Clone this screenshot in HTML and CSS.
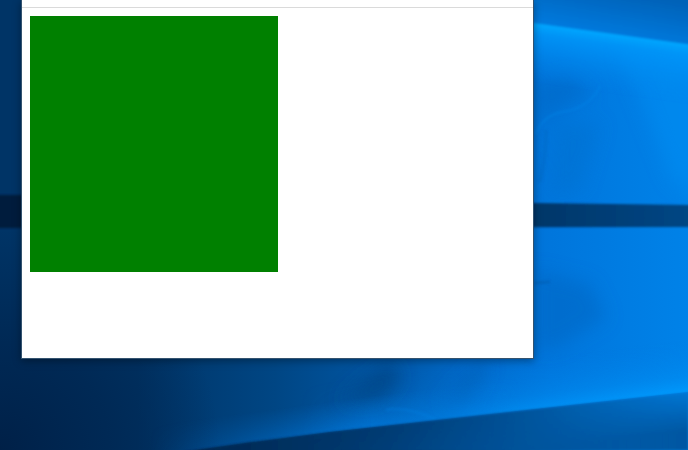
FILE: index.html
```html
<!DOCTYPE html>
<html lang="en">
<head>
    <meta charset="UTF-8">
    <meta name="viewport" content="width=device-width, initial-scale=1.0">
    <title>Green Box</title>
    <link rel="stylesheet" href="styles.css">
</head>
<body>

    <div class="desktop">
        <svg class="wallpaper" viewBox="0 0 688 450" preserveAspectRatio="none" aria-hidden="true">
            <defs>
                <linearGradient id="base" gradientUnits="userSpaceOnUse" x1="0" y1="0" x2="688" y2="0">
                    <stop offset="0" stop-color="#003466"/>
                    <stop offset="0.2" stop-color="#003466"/>
                    <stop offset="0.4" stop-color="#004684"/>
                    <stop offset="0.57" stop-color="#0058a8"/>
                    <stop offset="0.68" stop-color="#006aca"/>
                    <stop offset="0.8" stop-color="#0076dc"/>
                    <stop offset="1" stop-color="#0082e8"/>
                </linearGradient>
                <radialGradient id="corner" gradientUnits="userSpaceOnUse" cx="0" cy="450" r="220">
                    <stop offset="0" stop-color="#001e44" stop-opacity="0.9"/>
                    <stop offset="0.5" stop-color="#00224a" stop-opacity="0.6"/>
                    <stop offset="1" stop-color="#00224a" stop-opacity="0"/>
                </radialGradient>
                <linearGradient id="sky" gradientUnits="userSpaceOnUse" x1="640" y1="-5" x2="632" y2="40">
                    <stop offset="0" stop-color="#0062b8"/>
                    <stop offset="1" stop-color="#007ade"/>
                </linearGradient>
                <linearGradient id="topBeam" gradientUnits="userSpaceOnUse" x1="610" y1="33" x2="602" y2="92">
                    <stop offset="0" stop-color="#00a8ff"/>
                    <stop offset="0.2" stop-color="#0098fa" stop-opacity="0.8"/>
                    <stop offset="1" stop-color="#0088f0" stop-opacity="0"/>
                </linearGradient>
                <linearGradient id="lowBeam" gradientUnits="userSpaceOnUse" x1="560" y1="407" x2="554" y2="355">
                    <stop offset="0" stop-color="#009cff" stop-opacity="0.9"/>
                    <stop offset="0.3" stop-color="#0090f4" stop-opacity="0.55"/>
                    <stop offset="1" stop-color="#0080e8" stop-opacity="0"/>
                </linearGradient>
                <linearGradient id="lowBeamLeft" gradientUnits="userSpaceOnUse" x1="330" y1="432" x2="326" y2="402">
                    <stop offset="0" stop-color="#0078dc" stop-opacity="0.7"/>
                    <stop offset="1" stop-color="#0078dc" stop-opacity="0"/>
                </linearGradient>
                <linearGradient id="fade" gradientUnits="userSpaceOnUse" x1="300" y1="0" x2="688" y2="0">
                    <stop offset="0" stop-color="#fff" stop-opacity="0"/>
                    <stop offset="0.5" stop-color="#fff" stop-opacity="0.6"/>
                    <stop offset="1" stop-color="#fff"/>
                </linearGradient>
                <mask id="fadeMask" maskUnits="userSpaceOnUse" x="0" y="0" width="688" height="450">
                    <rect width="688" height="450" fill="url(#fade)"/>
                </mask>
                <linearGradient id="fadeLeft" gradientUnits="userSpaceOnUse" x1="150" y1="0" x2="520" y2="0">
                    <stop offset="0" stop-color="#fff" stop-opacity="0"/>
                    <stop offset="0.6" stop-color="#fff"/>
                    <stop offset="1" stop-color="#fff" stop-opacity="0"/>
                </linearGradient>
                <mask id="fadeLeftMask" maskUnits="userSpaceOnUse" x="0" y="0" width="688" height="450">
                    <rect width="688" height="450" fill="url(#fadeLeft)"/>
                </mask>
                <linearGradient id="bar" gradientUnits="userSpaceOnUse" x1="0" y1="0" x2="688" y2="0">
                    <stop offset="0" stop-color="#001c3c"/>
                    <stop offset="0.77" stop-color="#003668"/>
                    <stop offset="1" stop-color="#004684"/>
                </linearGradient>
                <linearGradient id="floor" gradientUnits="userSpaceOnUse" x1="190" y1="0" x2="688" y2="0">
                    <stop offset="0" stop-color="#00264e"/>
                    <stop offset="0.4" stop-color="#003c74"/>
                    <stop offset="0.65" stop-color="#005298"/>
                    <stop offset="1" stop-color="#0078d6"/>
                </linearGradient>
                <linearGradient id="floorShade" gradientUnits="userSpaceOnUse" x1="600" y1="402" x2="606" y2="450">
                    <stop offset="0" stop-color="#00529a" stop-opacity="0"/>
                    <stop offset="0.8" stop-color="#00529a" stop-opacity="0.85"/>
                </linearGradient>
                <filter id="soft" filterUnits="userSpaceOnUse" x="-40" y="-40" width="768" height="530">
                    <feGaussianBlur stdDeviation="9"/>
                </filter>
                <filter id="edge" filterUnits="userSpaceOnUse" x="-20" y="-20" width="730" height="500">
                    <feGaussianBlur stdDeviation="1"/>
                </filter>
            </defs>

            <rect width="688" height="450" fill="url(#base)"/>
            <rect width="688" height="450" fill="url(#corner)"/>

            <!-- smoke -->
            <g filter="url(#soft)">
                <path d="M534 82 L572 76 L592 96 L560 108 L536 130 Z" fill="#0068c4" opacity="0.6"/>
                <path d="M556 122 L600 124 L580 190 L550 195 Z" fill="#0070d0" opacity="0.5"/>
                <path d="M534 270 L590 284 L606 318 L560 346 L534 350 Z" fill="#0068c4" opacity="0.6"/>
                <path d="M340 402 L368 378 L392 362 L400 380 L380 402 Z" fill="#004484" opacity="0.8"/>
                <path d="M440 405 L478 362 L488 366 L468 404 Z" fill="#005cb0" opacity="0.7"/>
                <path d="M620 50 L700 50 L700 200 L672 180 Z" fill="#0090f4" opacity="0.5"/>
            </g>
            <g fill="none" filter="url(#edge)">
                <path d="M536 134 Q542 116 562 112 Q590 108 600 86" stroke="#158cf0" stroke-width="3" opacity="0.25"/>
                <path d="M546 130 Q546 158 540 182" stroke="#0064bc" stroke-width="4" opacity="0.3"/>
                <path d="M534 283 L550 282" stroke="#0058a8" stroke-width="3" opacity="0.4"/>
                <path d="M386 410 Q408 406 436 420" stroke="#1080e0" stroke-width="3" opacity="0.3"/>
            </g>

            <!-- window light -->
            <g filter="url(#edge)">
                <path d="M533 -10 H700 V46 L533 23 Z" fill="url(#sky)"/>
                <path d="M533 23 L700 46 V120 L533 84 Z" fill="url(#topBeam)"/>
                <path d="M-10 195 L22 195 L533 203 L700 205 V227 L-10 228 Z" fill="url(#bar)"/>
            </g>
            <path d="M190 450 L330 432 L500 413 L688 392 V330 L300 360 Z" fill="url(#lowBeam)" mask="url(#fadeMask)"/>
            <path d="M150 456 L330 432 L520 411 V370 L150 410 Z" fill="url(#lowBeamLeft)" mask="url(#fadeLeftMask)"/>
            <g filter="url(#edge)">
                <path d="M170 454 L250 442 L330 432 L500 413 L700 391 V460 H170 Z" fill="url(#floor)"/>
                <path d="M170 454 L250 442 L330 432 L500 413 L700 391 V460 H170 Z" fill="url(#floorShade)" mask="url(#fadeMask)"/>
            </g>
        </svg>

        <main class="window">
            <div class="toolbar"></div>
            <div class="page">
                <div class="box"></div>
            </div>
        </main>
    </div>

</body>
</html>
```
FILE: styles.css
```css
body {
    margin: 0;
    font-family: "Liberation Sans", Arial, sans-serif;
    background-color: #003263;
}

.desktop {
    position: relative;
    display: flex;
    min-height: 100vh;
    padding: 0 154px 91px 21px;
    box-sizing: border-box;
    overflow: hidden;
}

.wallpaper {
    position: absolute;
    inset: 0;
    width: 100%;
    height: 100%;
}

.window {
    position: relative;
    display: flex;
    flex-direction: column;
    flex-grow: 1;
    background-color: #ffffff;
    border: 1px solid #34536f;
    border-top: none;
    box-shadow: 0 2px 8px rgba(0, 0, 0, 0.35);
}

.toolbar {
    height: 7px;
    border-bottom: 1px solid #dadada;
}

.page {
    flex-grow: 1;
    padding: 8px;
}

.box {
    width: 248px;
    height: 256px;
    background-color: #008000;
}
```
